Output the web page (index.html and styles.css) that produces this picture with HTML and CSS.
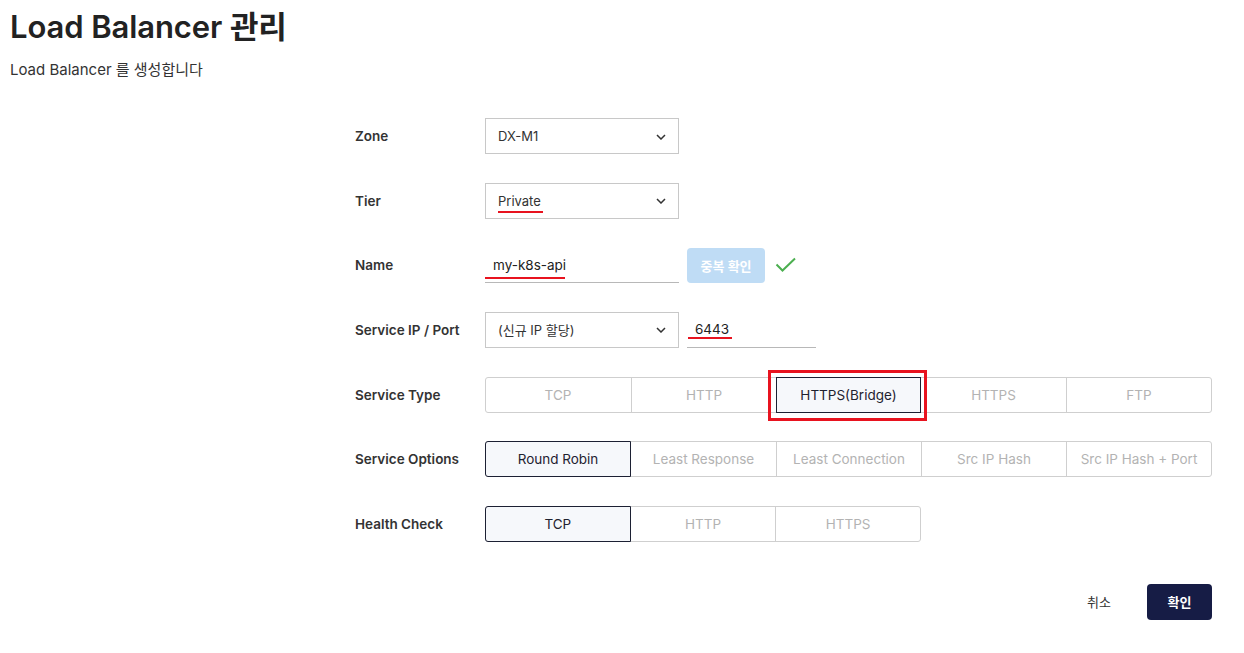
FILE: index.html
```html
<!DOCTYPE html>
<html lang="ko">
<head>
<meta charset="utf-8">
<title>Load Balancer 관리</title>
<link rel="stylesheet" href="styles.css">
</head>
<body>
<header class="page-head">
  <h1 class="title">Load Balancer 관리</h1>
  <p class="subtitle">Load Balancer 를 생성합니다</p>
</header>

<main class="form">
  <div class="row">
    <div class="label">Zone</div>
    <div class="select">
      <span class="select-text">DX-M1</span>
      <svg class="chev" width="10" height="6" viewBox="0 0 10 6"><polyline points="1,1 5,5 9,1" fill="none" stroke="#333" stroke-width="1.5"/></svg>
    </div>
  </div>

  <div class="row">
    <div class="label">Tier</div>
    <div class="select">
      <span class="select-text mark-wrap">Private<span class="mark mark-private"></span></span>
      <svg class="chev" width="10" height="6" viewBox="0 0 10 6"><polyline points="1,1 5,5 9,1" fill="none" stroke="#333" stroke-width="1.5"/></svg>
    </div>
  </div>

  <div class="row">
    <div class="label">Name</div>
    <div class="line-input name-input mark-wrap">
      <span class="input-text">my-k8s-api</span>
      <span class="mark mark-name"></span>
    </div>
    <button class="dup-btn" type="button">중복 확인</button>
    <svg class="check" width="22" height="16" viewBox="0 0 22 16"><polyline points="1.5,7.5 7.5,13.5 20,1.5" fill="none" stroke="#4caf50" stroke-width="2"/></svg>
  </div>

  <div class="row">
    <div class="label">Service IP / Port</div>
    <div class="select">
      <span class="select-text">(신규 IP 할당)</span>
      <svg class="chev" width="10" height="6" viewBox="0 0 10 6"><polyline points="1,1 5,5 9,1" fill="none" stroke="#333" stroke-width="1.5"/></svg>
    </div>
    <div class="line-input port-input mark-wrap">
      <span class="input-text">6443</span>
      <span class="mark mark-port"></span>
    </div>
  </div>

  <div class="row">
    <div class="label">Service Type</div>
    <div class="seg seg-5">
      <div class="seg-item">TCP</div>
      <div class="seg-item">HTTP</div>
      <div class="seg-item active boxed">HTTPS(Bridge)<span class="red-box"></span></div>
      <div class="seg-item">HTTPS</div>
      <div class="seg-item">FTP</div>
    </div>
  </div>

  <div class="row">
    <div class="label">Service Options</div>
    <div class="seg seg-5">
      <div class="seg-item active first">Round Robin</div>
      <div class="seg-item">Least Response</div>
      <div class="seg-item">Least Connection</div>
      <div class="seg-item">Src IP Hash</div>
      <div class="seg-item">Src IP Hash + Port</div>
    </div>
  </div>

  <div class="row">
    <div class="label">Health Check</div>
    <div class="seg seg-3">
      <div class="seg-item active first">TCP</div>
      <div class="seg-item">HTTP</div>
      <div class="seg-item">HTTPS</div>
    </div>
  </div>

  <div class="actions">
    <button class="btn-cancel" type="button">취소</button>
    <button class="btn-ok" type="button">확인</button>
  </div>
</main>
</body>
</html>
```

FILE: styles.css
```css
* { box-sizing: border-box; }

html, body {
  margin: 0;
  padding: 0;
  background: #fff;
}

body {
  font-family: Inter, "Noto Sans CJK KR", "Noto Sans", sans-serif;
  color: #222;
}

.page-head {
  padding: 8px 0 0 10px;
}

.title {
  margin: 0;
  font-size: 31px;
  line-height: 37px;
  font-weight: 600;
  color: #222;
  letter-spacing: -0.1px;
}

.subtitle {
  margin: 16px 0 0;
  font-size: 15px;
  line-height: 18px;
  color: #333;
}

.form {
  margin: 39px 0 0 355px;
  width: 857px;
  display: flex;
  flex-direction: column;
  gap: 28.67px;
}

.row {
  display: flex;
  align-items: center;
  height: 36px;
}

.label {
  width: 130px;
  flex: none;
  font-size: 13.5px;
  font-weight: 600;
  color: #333;
}

.select {
  width: 194px;
  height: 36px;
  border: 1px solid #c8c8c8;
  display: flex;
  align-items: center;
  justify-content: space-between;
  padding: 0 12px 0 12px;
  font-size: 13px;
  color: #333;
  background: #fff;
}

.chev {
  display: block;
  margin-top: 1px;
}

.mark-wrap {
  position: relative;
}

.mark {
  position: absolute;
  height: 2px;
  background: #e8131f;
}

.mark-private {
  left: 0;
  right: -2px;
  bottom: -4px;
}

.line-input {
  height: 36px;
  border-bottom: 1px solid #b8b8b8;
  display: flex;
  align-items: center;
  font-size: 13.5px;
  color: #222;
}

.name-input {
  width: 194px;
  padding: 0 0 0 8px;
}

.mark-name {
  left: 0;
  width: 80px;
  bottom: 3px;
}

.port-input {
  width: 129px;
  margin-left: 8px;
  padding: 0 0 0 8px;
}

.mark-port {
  left: 1px;
  width: 44px;
  bottom: 8px;
}

.input-text {
  display: block;
}

.dup-btn {
  margin-left: 8px;
  width: 78px;
  height: 35px;
  border: none;
  border-radius: 4px;
  background: #bfdcf5;
  color: #fff;
  font-family: inherit;
  font-size: 13px;
  font-weight: 600;
  padding: 0;
}

.check {
  display: block;
  margin-left: 10px;
}

.seg {
  display: grid;
  height: 36px;
  border: 1px solid #cfcfcf;
  border-radius: 3px;
  background: #fff;
}

.seg-5 {
  width: 727px;
  grid-template-columns: repeat(5, 1fr);
}

.seg-3 {
  width: 436px;
  grid-template-columns: repeat(3, 1fr);
}

.seg-item {
  display: flex;
  align-items: center;
  justify-content: center;
  font-size: 13.5px;
  color: #b3b3b3;
  border-left: 1px solid #cfcfcf;
  margin: -1px 0;
  white-space: nowrap;
}

.seg-item:first-child {
  border-left: none;
  margin-left: -1px;
}

.seg-item.active {
  border: 1px solid #1c2033;
  background: #f6f8fb;
  color: #1f2230;
  position: relative;
}

.seg-item.active.first {
  border-radius: 3px 0 0 3px;
}

.seg-item.active + .seg-item {
  border-left: none;
}

.red-box {
  position: absolute;
  left: -9px;
  top: -8px;
  right: -7px;
  bottom: -9px;
  border: 3px solid #e8131f;
}

.actions {
  display: flex;
  justify-content: flex-end;
  align-items: center;
  margin-top: 13px;
  gap: 20px;
}

.btn-cancel {
  background: none;
  border: none;
  font-family: inherit;
  font-size: 13px;
  color: #333;
  height: 36px;
  padding: 0 16px;
}

.btn-ok {
  width: 65px;
  height: 36px;
  border: none;
  border-radius: 4px;
  background: #161c45;
  color: #fff;
  font-family: inherit;
  font-size: 13px;
  font-weight: 700;
  padding: 0;
}
```
